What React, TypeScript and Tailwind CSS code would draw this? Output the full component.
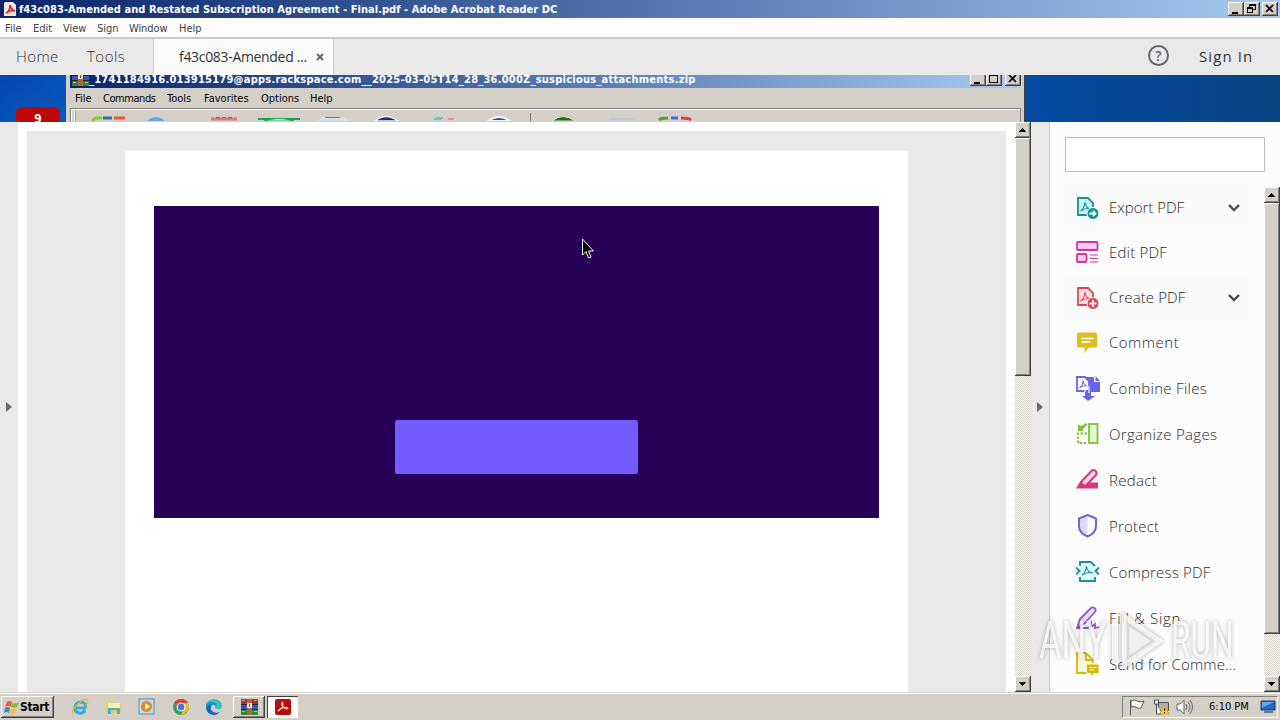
import { clsx } from "clsx";
import type { ReactNode } from "react";

const raised =
  "bg-[#d4d0c8] shadow-[inset_-1px_-1px_#404040,inset_1px_1px_#fff,inset_-2px_-2px_#808080]";
const tahoma = "font-['DejaVu_Sans_Condensed','DejaVu_Sans',sans-serif]";
const clean = "font-['Open_Sans','Noto_Sans',sans-serif]";
const scrollTrack =
  "bg-[repeating-conic-gradient(#d4d0c8_0_25%,#fff_0_50%)] bg-[length:2px_2px]";

type WindowAction = "minimize" | "restore" | "maximize" | "close";

const WindowButton = ({ action }: { action: WindowAction }) => (
  <span className={clsx("flex h-[14px] w-4 items-center justify-center", raised)}>
    <svg width="16" height="14" fill="none" stroke="#000" shapeRendering="crispEdges">
      {action === "minimize" && <path d="M4 11h6" strokeWidth="2" />}
      {action === "maximize" && <path d="M3.5 2.5h8v8h-8zM3 3.5h9" />}
      {action === "restore" && (
        <path d="M5.5 5V2.5h6v5H9M5 3.5h7M3.5 5.5h5v5h-5zM3 6.5h6" />
      )}
      {action === "close" && (
        <path d="M4 3l7 7m0-7l-7 7" strokeWidth="1.7" shapeRendering="auto" />
      )}
    </svg>
  </span>
);

const ScrollButton = ({ down }: { down?: boolean }) => (
  <span className={clsx("flex h-4 shrink-0 items-center justify-center pr-px", raised)}>
    <svg width="7" height="4" shapeRendering="crispEdges">
      <path d={down ? "M0 0h7L3.5 4z" : "M0 4h7L3.5 0z"} />
    </svg>
  </span>
);

const ScrollBar = ({ thumb, className }: { thumb: string; className: string }) => (
  <div className={clsx("flex shrink-0 flex-col", scrollTrack, className)}>
    <ScrollButton />
    <div className={clsx("shrink-0", thumb, raised)} />
    <div className="flex-1" />
    <ScrollButton down />
  </div>
);

const PdfMark = () => (
  <path
    d="M6 15c2-1 4-4 4.5-9 .5 4 3 7 6.5 7-4-1-8 0-11 2"
    fill="none"
    stroke="currentColor"
    strokeWidth="1.1"
  />
);

const ExportIcon = () => (
  <g stroke="currentColor" strokeWidth="1.8">
    <path d="M11 19H2V2h10l5 5v5" fill="#c9f2f5" />
    <g transform="translate(-1.5 0)">
      <PdfMark />
    </g>
    <circle cx="17" cy="17.5" r="6" fill="currentColor" stroke="#fff" strokeWidth="1" />
    <path d="M13.5 17.5h6m-2.5-2.5l2.5 2.5-2.5 2.5" stroke="#fff" fill="none" />
  </g>
);

const EditIcon = () => (
  <g fill="#ffc9f2" stroke="currentColor" strokeWidth="1.8">
    <rect x="1" y="1" width="20.5" height="8" rx="1" />
    <rect x="1" y="13" width="9.5" height="8" rx="1" />
    <path d="M14 14h8m-8 3.5h8m-8 3.5h8" strokeWidth="1.2" />
  </g>
);

const CreateIcon = () => (
  <g stroke="currentColor" strokeWidth="1.8">
    <path d="M11 19H2V2h10l5 5v5" fill="#ffe0e2" />
    <g transform="translate(-1.5 0)">
      <PdfMark />
    </g>
    <circle cx="17" cy="17.5" r="6" fill="currentColor" stroke="#fff" strokeWidth="1" />
    <path d="M13.5 17.5h7m-3.5-3.5v7" stroke="#fff" />
  </g>
);

const CommentIcon = () => (
  <>
    <path
      d="M2.5 1.500h17q1.5 0 1.5 1.500v12q0 1.500-1.500 1.500H13L8.500 22v-5.500h-6Q1 16.500 1 15V3q0-1.500 1.500-1.500z"
      fill="currentColor"
    />
    <path d="M5.5 7.5h12m-12 3.5h9" stroke="#fff" strokeWidth="1.5" />
  </>
);

const CombineIcon = () => (
  <>
    <path d="M10 1h8v5h6v10H15v4h4l-7 5-6-5h3V9z" fill="currentColor" />
    <path d="M19.5 0v5H24z" fill="currentColor" />
    <path d="M1 1h8l4 4v10H1z" fill="#fff" stroke="currentColor" strokeWidth="1.8" />
    <path d="M3.5 12Q7 10 7 5q.5 4 4 5-4-1-7.5 2" fill="none" stroke="currentColor" />
    <path d="M9 16v-5h4v6" fill="none" stroke="#fff" strokeWidth="1.2" />
  </>
);

const OrganizeIcon = () => (
  <g fill="none" stroke="currentColor" strokeWidth="1.8">
    <rect x="13" y="2" width="8.5" height="19" fill="#e3fad0" />
    <path d="M11 11.5H2V21h9" strokeDasharray="2.5 1.5" />
    <path d="M2 9V2l2 2 3-1-2 3 3 3z" fill="currentColor" stroke="none" />
    <path d="M10.5 2L5 7" strokeWidth="2.5" />
  </g>
);

const RedactIcon = () => (
  <>
    <path d="M0 20.5l4-7 5 4 3-3h10v6z" fill="currentColor" />
    <path
      d="M5 14L15.500 3q2-2 4 0t.5 4L10 17.500q-3.500.5-5-3.500z"
      fill="#ffd0e5"
      stroke="currentColor"
      strokeWidth="2"
    />
  </>
);

const ProtectIcon = () => (
  <>
    <path d="M11.5 1L3 4.500V12q0 7 8.500 10.500z" fill="#dddcff" />
    <path
      d="M11.5 1l8.500 3.500V12q0 7-8.500 10.500Q3 19 3 12V4.500z"
      fill="none"
      stroke="currentColor"
      strokeWidth="2"
    />
  </>
);

const CompressIcon = () => (
  <g stroke="currentColor" strokeWidth="1.9" fill="none">
    <path d="M4 5h15v12H4z" fill="#dafafa" stroke="none" />
    <path d="M4 6V2h11l4 4M4 17v4h15v-4" fill="#dafafa" />
    <path d="M0 7.5L3.500 11 0 14.500M23 7.500L19.500 11l3.500 3.500" />
    <PdfMark />
  </g>
);

const SignIcon = () => (
  <g stroke="currentColor" strokeWidth="1.8" fill="none">
    <path
      d="M1 22l3-9L14.500 2.500q2-2 4-.5t.5 4L9 17z"
      fill="#eddcff"
      strokeLinejoin="round"
    />
    <path d="M0 22h12l3-5v4l4-3v4l4-1" />
  </g>
);

const SendIcon = () => (
  <>
    <path d="M10 21H1V1h9l7 7v3M10 1v7h7" fill="#fff8d7" stroke="currentColor" strokeWidth="1.8" />
    <path d="M11 12.500h11.500V21H18l-3 3v-3h-4z" fill="currentColor" />
    <path d="M13.5 15.5h7m-7 2.5h5" stroke="#fff" />
  </>
);

type Tool = {
  label: string;
  color: string;
  icon: () => ReactNode;
  expandable?: boolean;
  tracking: string;
};

const tools: Tool[] = [
  { label: "Export PDF", color: "text-[#16918f]", icon: ExportIcon, expandable: true, tracking: "tracking-normal" },
  { label: "Edit PDF", color: "text-[#ca3996]", icon: EditIcon, tracking: "tracking-[0.2px]" },
  { label: "Create PDF", color: "text-[#df4651]", icon: CreateIcon, expandable: true, tracking: "tracking-[0.1px]" },
  { label: "Comment", color: "text-[#dfbd22]", icon: CommentIcon, tracking: "tracking-[0.5px]" },
  { label: "Combine Files", color: "text-[#6664e8]", icon: CombineIcon, tracking: "tracking-[0.3px]" },
  { label: "Organize Pages", color: "text-[#7ebf3a]", icon: OrganizeIcon, tracking: "tracking-[0.3px]" },
  { label: "Redact", color: "text-[#d63980]", icon: RedactIcon, tracking: "tracking-[0.3px]" },
  { label: "Protect", color: "text-[#6c65d6]", icon: ProtectIcon, tracking: "tracking-[0.2px]" },
  { label: "Compress PDF", color: "text-[#20908e]", icon: CompressIcon, tracking: "tracking-[0.2px]" },
  { label: "Fill & Sign", color: "text-[#8e5acb]", icon: SignIcon, tracking: "tracking-[0.7px]" },
  { label: "Send for Comme...", color: "text-[#d6b70d]", icon: SendIcon, tracking: "tracking-[0.15px]" },
];

const ToolRow = ({ tool, index }: { tool: Tool; index: number }) => {
  const Icon = tool.icon;

  return (
    <div
      className={clsx(
        "ml-[14px] flex w-[184px] shrink-0 items-center pl-3",
        index < 4 ? "h-[45px]" : "h-[46px]",
        tool.expandable && "bg-[#fafafa]",
      )}
    >
      <svg width="24" height="26" viewBox="0 -1 24 26" className={clsx("shrink-0", tool.color)} fill="none">
        <Icon />
      </svg>
      <span
        className={clsx("ml-[9px] flex-1 whitespace-nowrap text-[15px] font-light text-[#292929]", tool.tracking)}
      >
        {tool.label}
      </span>
      {tool.expandable && (
        <svg width="12" height="8" className="mr-2" fill="none" stroke="#4a4a4a" strokeWidth="2.4">
          <path d="M1 1l5 5 5-5" />
        </svg>
      )}
    </div>
  );
};

const AcrobatLogo = ({ size }: { size: number }) => (
  <svg width={size} height={size} viewBox="0 0 16 16" className="shrink-0">
    <rect width="16" height="16" rx="2" fill="#b50e0b" />
    <path
      d="M3 12c2 0 5-4 5-7 0-3-2-2-1 1 1 2 3 4 5 4s1-2-2-1.500C7 9 3 10 3 12z"
      fill="none"
      stroke="#fff"
      strokeWidth="1"
    />
  </svg>
);

const BooksLogo = ({ className }: { className?: string }) => (
  <svg width="17" height="16" viewBox="0 0 17 16" className={className} shapeRendering="crispEdges">
    <path d="M0 0h17v5H0z" fill="#b52b38" />
    <path d="M0 5h17v6H0z" fill="#3757b8" />
    <path d="M0 11h17v5H0z" fill="#2c8b35" />
    <path d="M0 5.5h17M0 10.5h17" stroke="#2a1d3c" />
    <path d="M1 1.5h3M13 1.5h3M1 12.5h3M13 12.5h3" stroke="#d8a09c" />
    <path d="M6 0h5v16H6z" fill="#a66b35" />
    <path d="M6 4h5v5H6z" fill="#f3e3b5" />
    <path d="M8 5h1v3H8z" fill="#7c4a25" />
  </svg>
);

const TitleBar = () => (
  <div className="flex h-[18px] shrink-0 items-center bg-linear-to-r from-[#0a246a] to-[#a6caf0] pl-1 pr-[2px]">
    <svg width="12" height="14" viewBox="0 0 12 14">
      <path d="M1 0h8l3 3v11H0V1z" fill="#f5e6e5" />
      <path d="M2 11q4-2 4-8 1 5 5 6-5-1-9 2z" fill="none" stroke="#d42a25" strokeWidth="1.6" />
    </svg>
    <span className="ml-[3px] flex-1 whitespace-nowrap pt-0.5 text-[11px] font-bold tracking-[0.045px] text-white">
      f43c083-Amended and Restated Subscription Agreement - Final.pdf - Adobe Acrobat Reader DC
    </span>
    <WindowButton action="minimize" />
    <WindowButton action="restore" />
    <span className="w-0.5" />
    <WindowButton action="close" />
  </div>
);

const MenuBar = () => (
  <div className="flex h-[21px] shrink-0 items-center border-b-2 border-[#cacaca] bg-[#fdfdfd] pt-[3px] text-[11px] text-[#404040]">
    <span className="ml-[5px] w-7">File</span>
    <span className="w-[30px]">Edit</span>
    <span className="w-[34px]">View</span>
    <span className="w-8">Sign</span>
    <span className="w-[50px] tracking-[-0.1px]">Window</span>
    <span>Help</span>
  </div>
);

const TabBar = () => (
  <div className={clsx("flex h-9 shrink-0 items-center bg-[#e9e9e9] text-[#333]", clean)}>
    <span className="ml-4 w-[71px] pb-0.5 text-[15px] font-light tracking-[0.4px]">Home</span>
    <span className="w-[66px] pb-0.5 text-[15px] font-light tracking-[0.5px]">Tools</span>
    <div className="flex h-full w-[181px] items-center border-x border-[#cfcfcf] bg-[#fbfbfb] pl-[25px]">
      <span className="w-[137px] whitespace-nowrap pb-px text-[14px] tracking-[-0.32px]">f43c083-Amended ...</span>
      <svg width="8" height="8" fill="none" stroke="#666" strokeWidth="2" className="-mt-px">
        <path d="M1 1l6 6m0-6L1 7" />
      </svg>
    </div>
    <span className="flex-1" />
    <span className="mb-1 mr-[30px] flex size-[21px] items-center justify-center rounded-full border-2 border-[#686868] text-[14px] font-semibold text-[#686868]">
      ?
    </span>
    <span className="w-[81px] pb-0.5 text-[15px] tracking-[1.1px]">Sign In</span>
  </div>
);

const ArchiveToolbar = () => (
  <svg width="950" height="12" className="block">
    <path d="M3.5 2v10" stroke="#fff" />
    <path d="M4.5 2v10" stroke="#8ba0b0" />
    <g fill="none" strokeWidth="3">
      <path d="M22 12q1-4 9-3" stroke="#82c639" />
      <path d="M32 9h9" stroke="#336f9b" />
      <path d="M43 9h11" stroke="#ed5638" />
      <path d="M140 10h26" stroke="#e0747c" />
      <path d="M187 10h42" stroke="#16a34a" strokeWidth="2" />
      <path d="M588 11q2-2 9-2" stroke="#51a62c" />
      <path d="M600 9h7" stroke="#3975df" />
      <path d="M610 9q8 0 10 2" stroke="#e23e48" />
    </g>
    <path d="M76 12q9-8 18 0z" fill="#67aae3" />
    <path d="M145 8.5h16" stroke="#776b75" strokeDasharray="4 2" />
    <path d="M193 12q15-5 30 0z" fill="#e8fff0" stroke="#16a34a" />
    <path d="M246 12l6-4h21l6 4z" fill="#d7e0ed" />
    <path d="M254 8.5h15" stroke="#77798a" />
    <path d="M304 12q11-9 23 0z" fill="#17336d" stroke="#eef4ff" strokeWidth="1.5" />
    <path d="M365 9h7M377 10h6" stroke="#ff8794" strokeWidth="2" />
    <path d="M363 10h7" stroke="#57cdd2" strokeWidth="2" />
    <path d="M417 12q11-8 22 0z" fill="#36538d" stroke="#eef4ff" strokeWidth="2" />
    <path d="M459.5 4v8" stroke="#777" />
    <path d="M481 12q11-9 23 0z" fill="#296b15" stroke="#dbe9d0" />
    <path d="M538 10h25" stroke="#afcbe9" strokeWidth="2" />
  </svg>
);

const Backdrop = () => (
  <div className="flex h-[47px] shrink-0 overflow-hidden">
    <div className="flex w-[66px] items-end bg-linear-to-br from-[#0645ad] to-[#075bc0]">
      <span className="ml-4 flex h-[15px] w-11 items-start justify-center rounded-t-md bg-[#bd0805] pt-1 text-[12px] leading-[16px] font-bold text-white">
        9
      </span>
    </div>
    <div className="flex w-[959px] flex-col border-r border-[#404040] bg-[#d4d0c8] pl-1 pr-[3px]">
      <div className="flex h-[13px] shrink-0 items-end overflow-hidden bg-linear-to-r from-[#0a246a] to-[#a6caf0] pl-0.5">
        <BooksLogo className="mb-0.5 shrink-0" />
        <span className="mb-px flex-1 whitespace-nowrap text-[11px] leading-[15px] font-bold tracking-[0.24px] text-white">
          _1741184916.013915179@apps.rackspace.com__2025-03-05T14_28_36.000Z_suspicious_attachments.zip
        </span>
        <span className="mb-0.5 flex">
          <WindowButton action="minimize" />
          <WindowButton action="maximize" />
          <span className="w-[3px]" />
          <WindowButton action="close" />
        </span>
      </div>
      <div className="flex h-5 shrink-0 items-center pt-0.5 text-[11px] text-black">
        <span className="ml-[5px] w-7">File</span>
        <span className="w-16 tracking-[-0.45px]">Commands</span>
        <span className="w-[37px]">Tools</span>
        <span className="w-[57px]">Favorites</span>
        <span className="w-[49px]">Options</span>
        <span>Help</span>
      </div>
      <div className="h-[14px] border border-b-0 border-[#808080] shadow-[inset_1px_1px_#fff]">
        <ArchiveToolbar />
      </div>
    </div>
    <div className="flex-1 bg-linear-to-r from-[#034aa4] to-[#0b4481]" />
  </div>
);

const PanelArrow = () => (
  <svg width="6" height="10" className="mb-px shrink-0 fill-[#6a6a6a]">
    <path d="M0 0l6 5-6 5z" />
  </svg>
);

const Cursor = () => (
  <svg width="13" height="21" viewBox="0 0 13 21" className="ml-[428px] mt-8">
    <path d="M.5 1v16L4 13.500 6.500 20 9 19l-2.500-6h5z" fill="#000" stroke="#fff" />
  </svg>
);

const DocumentView = () => (
  <div className="flex w-[997px] flex-col bg-white pl-[9px] pr-[9px] pt-[9px]">
    <div className="flex flex-1 justify-center bg-[#e9e9e9] pt-5">
      <div className="w-[783px] bg-white pl-[29px] pt-[55px]">
        <div className="flex h-[312px] w-[725px] flex-col bg-[#270157]">
          <Cursor />
          <div className="ml-[241px] mt-[161px] h-[54px] w-[243px] rounded-[2px] bg-[#735bff]" />
        </div>
      </div>
    </div>
  </div>
);

const ToolsPane = () => (
  <aside className={clsx("flex flex-1 flex-col border-l border-[#c8c8c8] bg-[#fcfcfc]", clean)}>
    <div className="ml-[15px] mt-[15px] h-[35px] w-[200px] shrink-0 border border-[#bfbfbf] bg-white" />
    <div className="mt-[13px] flex min-h-0 flex-1 justify-between">
      <div className="flex h-[505px] flex-col overflow-hidden">
        {tools.map((tool, index) => (
          <ToolRow key={tool.label} tool={tool} index={index} />
        ))}
      </div>
      <ScrollBar className="mt-[2px] w-4" thumb="h-[431px]" />
    </div>
  </aside>
);

const Watermark = () => (
  <div className="absolute left-[1039px] top-[609px] flex h-16 w-[196px] items-center justify-between text-white/80 drop-shadow-[0_0_2px_rgba(0,0,0,0.36)]">
    <span className="w-[62px] origin-left scale-x-[0.68] font-['Roboto',sans-serif] text-[51px] leading-[30px] font-normal">
      ANY
    </span>
    <svg width="58" height="64" viewBox="0 0 58 64" fill="none">
      <path d="M5 14h6v38H5z" fill="currentColor" />
      <path d="M15 3v58l42-29z" fill="currentColor" />
      <path d="M21 15v34l25-17z" stroke="#d8d8d8" strokeWidth="2.5" />
    </svg>
    <span className="w-[64px] origin-left scale-x-[0.62] font-['Roboto',sans-serif] text-[51px] leading-[30px] font-normal">
      RUN
    </span>
  </div>
);

const QuickLaunch = () => (
  <div className="ml-[17px] flex w-[162px] items-center gap-[15.5px]">
    <svg width="18" height="18" viewBox="0 0 18 18" fill="none">
      <path d="M14 12q-2 4-6 3-5-1-4-6t6-5q6 1 4 6H5" stroke="#38aadd" strokeWidth="3" />
      <path d="M2 15Q0 12 7 6t9-4q2 2-1 5" stroke="#e4b82d" strokeWidth="1.3" />
    </svg>
    <svg width="18" height="18" viewBox="0 0 18 18">
      <path d="M1 3h7l1 2h8v10H1z" fill="#edcc62" />
      <path d="M3 5h12v5H3z" fill="#fff2af" />
      <path d="M3 16v-6h12v6h-3v-4H6v4z" fill="#4ba9d8" />
    </svg>
    <svg width="18" height="18" viewBox="0 0 18 18">
      <rect x="1" y="1" width="15" height="15" fill="#bcdef5" stroke="#6686a7" />
      <circle cx="8.5" cy="8.5" r="5.5" fill="#ed8415" />
      <path d="M7 5l5 3.5L7 12z" fill="#fff" />
    </svg>
    <svg width="18" height="18" viewBox="0 0 18 18">
      <circle cx="9" cy="9" r="8" fill="#2fa34f" />
      <path d="M2 5q3-4 7-4 5 0 7 4H9q-3 0-4 4z" fill="#df4132" />
      <path d="M9 5h7q3 7-4 11l-3 1 4-8z" fill="#f5bd24" />
      <circle cx="9" cy="9" r="4" fill="#3979e6" stroke="#fff" strokeWidth="1" />
    </svg>
    <svg width="18" height="18" viewBox="0 0 18 18">
      <path d="M1 9q0-8 8-8 8 1 8 7 0 4-5 3l-2-1q1-4-3-4-5 0-6 3z" fill="#36bfc0" />
      <path d="M1 9q2-5 7-3-4 3-1 7 3 3 8 1-4 5-10 2-4-2-4-7z" fill="#1569bd" />
      <path d="M1 7q3-4 7-3 4 1 3 4-4-4-10 1z" fill="#238dce" />
    </svg>
  </div>
);

const TaskBar = () => (
  <footer className="flex h-7 shrink-0 items-center border-t border-[#d4d0c8] bg-[#d4d0c8] pt-px shadow-[inset_0_1px_#fff]">
    <div className={clsx("ml-px flex h-[22px] w-[53px] shrink-0 items-center pl-[3px]", raised)}>
      <svg width="15" height="15" viewBox="0 0 15 15">
        <path d="M3 2q3-2 5 0L7 7Q4 5 1 7z" fill="#e66434" />
        <path d="M9 3q3 1 6-1l-2 5q-3 1-6 0z" fill="#7fb83e" />
        <path d="M1 8q3-2 5 0l-1 5q-3-2-5 0z" fill="#3b8bcf" />
        <path d="M7 8q3 1 6 0l-2 5q-3 1-5 0z" fill="#f4bf31" />
      </svg>
      <span className="ml-px text-[12px] font-bold tracking-[-0.35px] text-black">Start</span>
    </div>
    <QuickLaunch />
    <div className={clsx("flex h-[22px] w-8 items-center justify-center", raised)}>
      <BooksLogo />
    </div>
    <div className="ml-0.5 flex h-[22px] w-[31px] items-center justify-center bg-white shadow-[inset_1px_1px_#404040,inset_-1px_-1px_#fff]">
      <AcrobatLogo size={16} />
    </div>
    <div className="ml-auto mr-0.5 flex h-[22px] w-[156px] items-center border border-[#808080] border-r-white border-b-white pl-1.5">
      <svg width="17" height="16" viewBox="0 0 17 16" fill="#fff" stroke="#555">
        <path d="M1.5 1v15M2 2q4-2 6 0 3 2 7 0l-3 7q-3 1-5-1-2-1-5 0z" />
      </svg>
      <svg width="17" height="16" viewBox="0 0 17 16" className="ml-[7px]">
        <path d="M5.5 3.5h10v8h-10z" fill="#a7afb0" stroke="#555" />
        <path d="M1.5 1v4h4V1zM3.5 5v10h5" fill="#fff" stroke="#444" />
        <path d="M11 6l5 9H7z" fill="#ffd43a" stroke="#d9a600" />
        <path d="M11.5 9v3m0 1v1" stroke="#000" />
      </svg>
      <svg width="17" height="16" viewBox="0 0 17 16" fill="#fff" stroke="#666" className="ml-1.5">
        <path d="M1 5h3l4-4v14l-4-4H1z" />
        <path d="M10 5q2 3 0 6m2-8q4 5 0 10m2-12q5 7 0 14" fill="none" />
      </svg>
      <span className="ml-4 w-[51px] whitespace-nowrap text-[11px] text-black">6:10 PM</span>
      <svg width="16" height="14" viewBox="0 0 16 14">
        <path d="M1 1h14v9H1z" fill="#2466bd" stroke="#173d73" />
        <path d="M2 2h12L2 8z" fill="#64a3e5" />
        <path d="M4 12h9" stroke="#5f7991" strokeWidth="2" />
      </svg>
    </div>
  </footer>
);

export default function App() {
  return (
    <div className={clsx("relative flex h-[720px] w-[1280px] flex-col overflow-hidden bg-white", tahoma)}>
      <TitleBar />
      <MenuBar />
      <TabBar />
      <Backdrop />
      <main className="flex min-h-0 flex-1">
        <div className="flex w-[18px] shrink-0 items-center justify-center bg-[#e9e9e9]">
          <PanelArrow />
        </div>
        <DocumentView />
        <ScrollBar className="w-4" thumb="h-[238px]" />
        <div className="flex w-[18px] shrink-0 items-center justify-center bg-[#e9e9e9]">
          <PanelArrow />
        </div>
        <ToolsPane />
      </main>
      <Watermark />
      <TaskBar />
    </div>
  );
}
